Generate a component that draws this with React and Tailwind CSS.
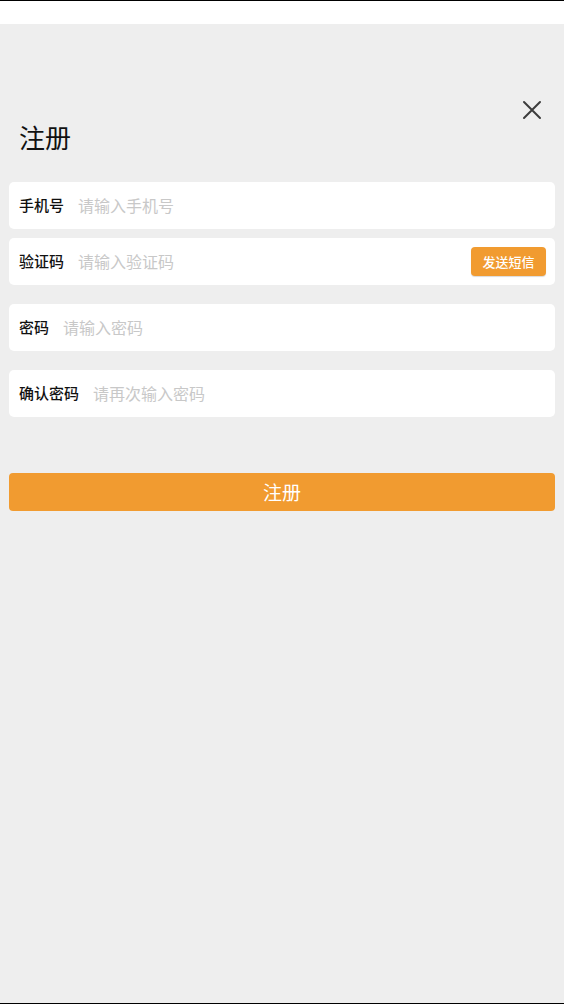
import { useState } from 'react';

function Field({ label, placeholder, type = 'text', action, className = '' }) {
  return (
    <div className={`flex items-center h-[47px] bg-white rounded-[5px] pl-[10px] pr-[9px] ${className}`}>
      <span className="text-[15px] font-medium text-[#111] shrink-0">{label}</span>
      <input
        type={type}
        placeholder={placeholder}
        className="flex-1 min-w-0 ml-[14px] h-[24px] leading-[22px] pb-[2px] text-[16px] text-[#111] placeholder:text-[#c8c8c8] bg-transparent focus:outline-none"
      />
      {action}
    </div>
  );
}

export default function App() {
  const [phone] = useState('');

  return (
    <div
      className="h-[1004px] flex flex-col border-y border-black bg-[#eeeeee]"
      style={{ fontFamily: '"Noto Sans CJK SC", "Noto Sans", sans-serif' }}
    >
      {/* status bar area */}
      <div className="h-[23px] bg-white shrink-0"></div>

      <div className="flex-1 px-[9px]">
        {/* close */}
        <div className="flex justify-end pt-[76px] pr-[13px]">
          <button className="w-5 h-5 flex items-center justify-center text-[#3c3c3c]">
            <svg width="20" height="20" viewBox="0 0 20 20" fill="none" stroke="currentColor" strokeWidth="2" strokeLinecap="round">
              <path d="M2 2 L18 18 M18 2 L2 18" />
            </svg>
          </button>
        </div>

        <h1 className="pl-[10px] h-[38px] leading-[34px] text-[26px] font-normal text-[#111]">注册</h1>

        <div className="mt-[24px] flex flex-col">
          <Field label="手机号" placeholder="请输入手机号" type="tel" />
          <Field
            label="验证码"
            placeholder="请输入验证码"
            className="mt-[9px]"
            action={
              <button className="shrink-0 w-[75px] h-[29px] rounded-[4px] bg-[#f19b30] text-white text-[13px] font-medium shadow-[0_1px_1px_rgba(0,0,0,0.15)]">
                发送短信
              </button>
            }
          />
          <Field label="密码" placeholder="请输入密码" type="password" className="mt-[19px]" />
          <Field label="确认密码" placeholder="请再次输入密码" type="password" className="mt-[19px]" />
        </div>

        <button className="mt-[56px] w-full h-[38px] rounded-[4px] bg-[#f19b30] text-white text-[19px]">
          注册
        </button>
      </div>
    </div>
  );
}
